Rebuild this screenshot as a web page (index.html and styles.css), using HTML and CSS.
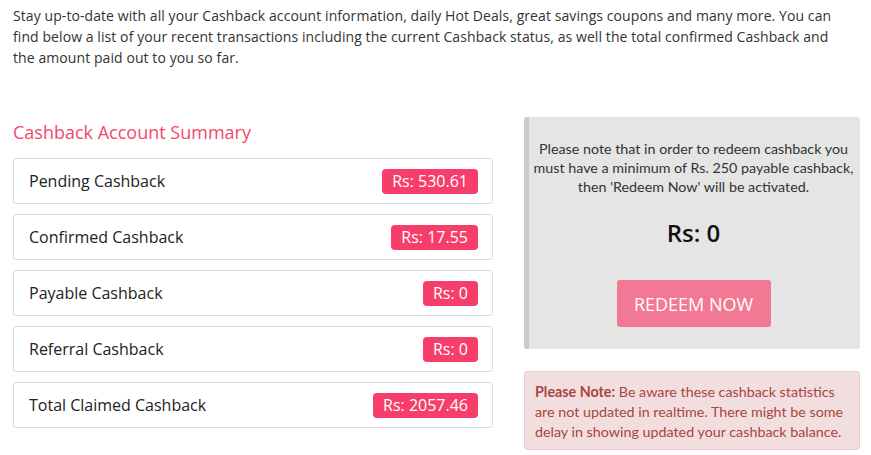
FILE: index.html
```html
<!DOCTYPE html>
<html>
<head>
<meta charset="utf-8">
<link rel="stylesheet" href="styles.css">
</head>
<body>
<p class="intro">Stay up-to-date with all your Cashback account information, daily Hot Deals, great savings coupons and many more. You can find below a list of your recent transactions including the current Cashback status, as well the total confirmed Cashback and the amount paid out to you so far.</p>
<div class="cols">
  <div class="left">
    <h3 class="title">Cashback Account Summary</h3>
    <div class="row"><span class="label">Pending Cashback</span><span class="badge">Rs: 530.61</span></div>
    <div class="row"><span class="label">Confirmed Cashback</span><span class="badge">Rs: 17.55</span></div>
    <div class="row"><span class="label">Payable Cashback</span><span class="badge">Rs: 0</span></div>
    <div class="row"><span class="label">Referral Cashback</span><span class="badge">Rs: 0</span></div>
    <div class="row"><span class="label">Total Claimed Cashback</span><span class="badge">Rs: 2057.46</span></div>
  </div>
  <div class="right">
    <div class="panel">
      <p class="panel-text">Please note that in order to redeem cashback you must have a minimum of Rs. 250 payable cashback, then 'Redeem Now' will be activated.</p>
      <div class="amount">Rs: 0</div>
      <button class="redeem">REDEEM NOW</button>
    </div>
    <div class="note"><b>Please Note:</b> Be aware these cashback statistics are not updated in realtime. There might be some delay in showing updated your cashback balance.</div>
  </div>
</div>
</body>
</html>
```
FILE: styles.css
```css
html, body { margin: 0; padding: 0; background: #fff; }
body { font-family: "Open Sans", sans-serif; color: #222; }
.intro {
  margin: 0;
  padding: 5px 0 0 13px;
  width: 830px;
  font-size: 14px;
  line-height: 21px;
  letter-spacing: 0.08px;
  color: #333;
}
.cols {
  display: flex;
  gap: 31px;
  padding: 0 11px 0 13px;
  margin-top: 49px;
}
.left { width: 480px; padding-top: 3px; }
.title {
  margin: 0 0 14px;
  font-weight: 400;
  font-size: 18px;
  line-height: 24px;
  color: #f3476e;
}
.row {
  display: flex;
  justify-content: space-between;
  align-items: center;
  height: 44px;
  border: 1px solid #dcdcdc;
  border-radius: 3px;
  padding: 0 14px 0 15px;
  margin-bottom: 10px;
}
.label { font-size: 16px; color: #222; }
.badge {
  background: #f73e6a;
  color: #fff;
  font-size: 16px;
  line-height: 25px;
  padding: 0 10px;
  border-radius: 4px;
}
.right { width: 336px; }
.panel {
  background: #e5e5e5;
  border-left: 5px solid #cbcbcb;
  border-radius: 3px;
  height: 232px;
  box-sizing: border-box;
  padding: 22px 4px 0 2px;
  text-align: center;
  font-family: "Lato", sans-serif;
}
.panel-text {
  margin: 0;
  font-size: 14.3px;
  font-weight: 400;
  line-height: 19px;
  color: #333;
}
.amount {
  font-family: "Open Sans", sans-serif;
  font-weight: 600;
  font-size: 24px;
  line-height: 30px;
  color: #111;
  margin-top: 22px;
}
.redeem {
  display: inline-block;
  margin-top: 32px;
  width: 154px;
  height: 47px;
  border: none;
  border-radius: 3px;
  background: #f37893;
  color: #fff;
  font-family: "Open Sans", sans-serif;
  font-size: 18px;
  padding: 0;
}
.note {
  margin-top: 22px;
  background: #f2dede;
  border: 1px solid #ebccd1;
  border-radius: 3px;
  color: #a94442;
  font-family: "Lato", sans-serif;
  font-size: 14.3px;
  font-weight: 400;
  line-height: 20px;
  padding: 10px 8px 7px 10px;
}
.note b { font-weight: 700; }
```
